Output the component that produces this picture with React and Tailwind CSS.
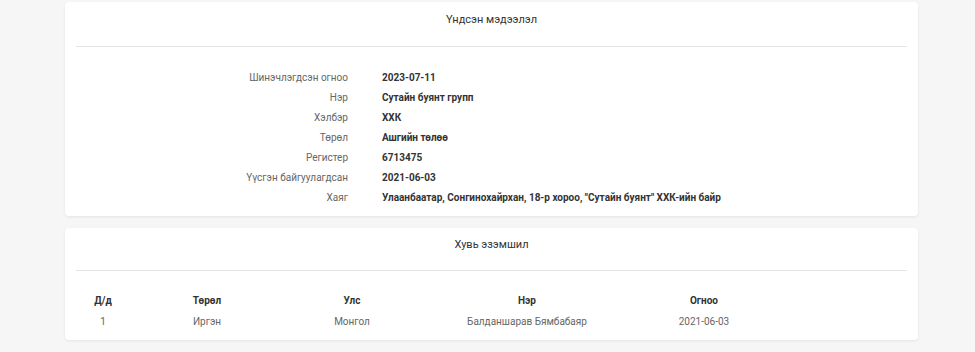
import React from "react";

const info = [
  ["Шинэчлэгдсэн огноо", "2023-07-11"],
  ["Нэр", "Сутайн буянт групп"],
  ["Хэлбэр", "ХХК"],
  ["Төрөл", "Ашгийн төлөө"],
  ["Регистер", "6713475"],
  ["Үүсгэн байгуулагдсан", "2021-06-03"],
  ["Хаяг", "Улаанбаатар, Сонгинохайрхан, 18-р хороо, \"Сутайн буянт\" ХХК-ийн байр"],
];

const owners = [
  { no: 1, type: "Иргэн", country: "Монгол", name: "Балданшарав Бямбабаяр", date: "2021-06-03" },
];

const cols = "grid grid-cols-[46px_162px_128px_222px_132px] text-center";

function Card({ title, children, className }) {
  return (
    <div className={"bg-white rounded-[4px] shadow-[0_1px_3px_rgba(0,0,0,0.08)] px-[11px] " + className}>
      <div className="text-center text-[11px] text-[#333] leading-[17px] border-b border-[#e4e4e4]">
        {title}
      </div>
      {children}
    </div>
  );
}

export default function App() {
  return (
    <div
      className="min-h-[352px] bg-[#f6f6f6] pt-[2px] pl-[65px] pr-[57px] text-[10px]"
      style={{ fontFamily: "Roboto, \"Noto Sans\", sans-serif" }}
    >
      <Card title="Үндсэн мэдээлэл" className="pb-[9px] [&>div:first-child]:pt-[9px] [&>div:first-child]:pb-[18px]">
        <div className="pt-[20px]">
          {info.map(([label, value]) => (
            <div key={label} className="flex h-[20px] items-center">
              <div className="w-[272px] text-right text-[#666]">{label}</div>
              <div className="pl-[34px] font-bold text-[#333]">{value}</div>
            </div>
          ))}
        </div>
      </Card>

      <Card title="Хувь эзэмшил" className="mt-[12px] pb-[8px] [&>div:first-child]:pt-[8px] [&>div:first-child]:pb-[17px]">
        <div className="mt-[19px] ml-[4px]">
          <div className={cols + " h-[21px] items-center font-bold text-[#333]"}>
            <div>Д/д</div>
            <div>Төрөл</div>
            <div>Улс</div>
            <div>Нэр</div>
            <div>Огноо</div>
          </div>
          {owners.map((o) => (
            <div key={o.no} className={cols + " h-[21px] items-center text-[#666]"}>
              <div>{o.no}</div>
              <div>{o.type}</div>
              <div>{o.country}</div>
              <div>{o.name}</div>
              <div>{o.date}</div>
            </div>
          ))}
        </div>
      </Card>
    </div>
  );
}
